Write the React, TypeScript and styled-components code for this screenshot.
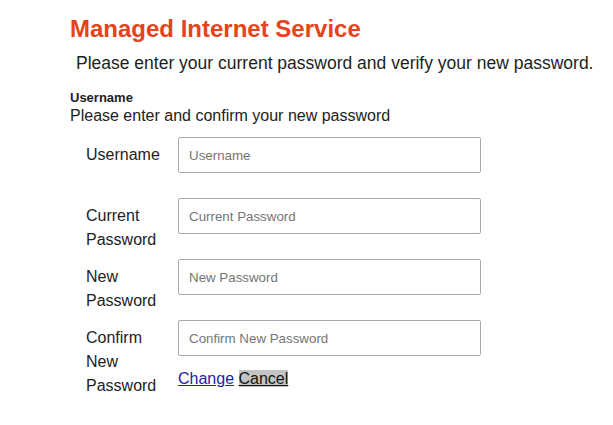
import React from "react";
import styled, { createGlobalStyle } from "styled-components";

const Global = createGlobalStyle`
  html, body {
    margin: 0;
    padding: 0;
    background: #ffffff;
  }
  body {
    font-family: "Liberation Sans", Arial, sans-serif;
    color: #222222;
  }
`;

const Page = styled.div`
  padding: 15px 0 0 70px;
  display: flex;
  flex-direction: column;
  align-items: flex-start;
`;

const Title = styled.h1`
  margin: 0;
  font-size: 24px;
  font-weight: bold;
  line-height: normal;
  color: #e4431b;
`;

const Intro = styled.p`
  margin: 10px 0 0 6px;
  font-size: 17.5px;
  line-height: normal;
  color: #1e1e1e;
`;

const SectionLabel = styled.div`
  margin-top: 16px;
  font-size: 13px;
  font-weight: bold;
  line-height: normal;
  color: #222222;
`;

const Hint = styled.div`
  margin-top: 2px;
  font-size: 16px;
  line-height: normal;
  color: #222222;
`;

const Form = styled.form`
  margin: 12px 0 0 16px;
  display: flex;
  flex-direction: column;
`;

const FieldRow = styled.div`
  display: grid;
  grid-template-columns: 92px 303px;
  align-items: start;
  min-height: 61px;
`;

const Label = styled.label`
  padding-top: 6px;
  width: 80px;
  font-size: 16px;
  line-height: 24px;
  color: #222222;
`;

const Field = styled.div`
  display: flex;
  flex-direction: column;
  align-items: flex-start;
`;

const Input = styled.input`
  box-sizing: border-box;
  width: 303px;
  height: 36px;
  margin: 0;
  padding: 0 10px;
  border: 1px solid #a9a9a9;
  border-radius: 2px;
  font-family: "Liberation Sans", Arial, sans-serif;
  font-size: 13.33px;
  color: #222;
  outline: none;
  &::placeholder {
    color: #757575;
  }
`;

const Actions = styled.div`
  margin-top: 14px;
  font-size: 16px;
  line-height: normal;
`;

const LinkAction = styled.a`
  color: #2222aa;
  text-decoration: underline;
  cursor: pointer;
`;

const CancelAction = styled.span`
  background: #c4c4c4;
  color: #111111;
  text-decoration: underline;
  cursor: pointer;
`;

const fields = [
  { id: "username", label: "Username", placeholder: "Username", type: "text" },
  { id: "current", label: "Current Password", placeholder: "Current Password", type: "password" },
  { id: "new", label: "New Password", placeholder: "New Password", type: "password" },
  { id: "confirm", label: "Confirm New Password", placeholder: "Confirm New Password", type: "password" },
];

export default function App() {
  return (
    <>
      <Global />
      <Page>
        <Title>Managed Internet Service</Title>
        <Intro>Please enter your current password and verify your new password.</Intro>
        <SectionLabel>Username</SectionLabel>
        <Hint>Please enter and confirm your new password</Hint>
        <Form onSubmit={(e) => e.preventDefault()}>
          {fields.map((f, i) => (
            <FieldRow key={f.id}>
              <Label htmlFor={f.id}>{f.label}</Label>
              <Field>
                <Input id={f.id} type={f.type} placeholder={f.placeholder} />
                {i === fields.length - 1 && (
                  <Actions>
                    <LinkAction>Change</LinkAction> <CancelAction>Cancel</CancelAction>
                  </Actions>
                )}
              </Field>
            </FieldRow>
          ))}
        </Form>
      </Page>
    </>
  );
}
